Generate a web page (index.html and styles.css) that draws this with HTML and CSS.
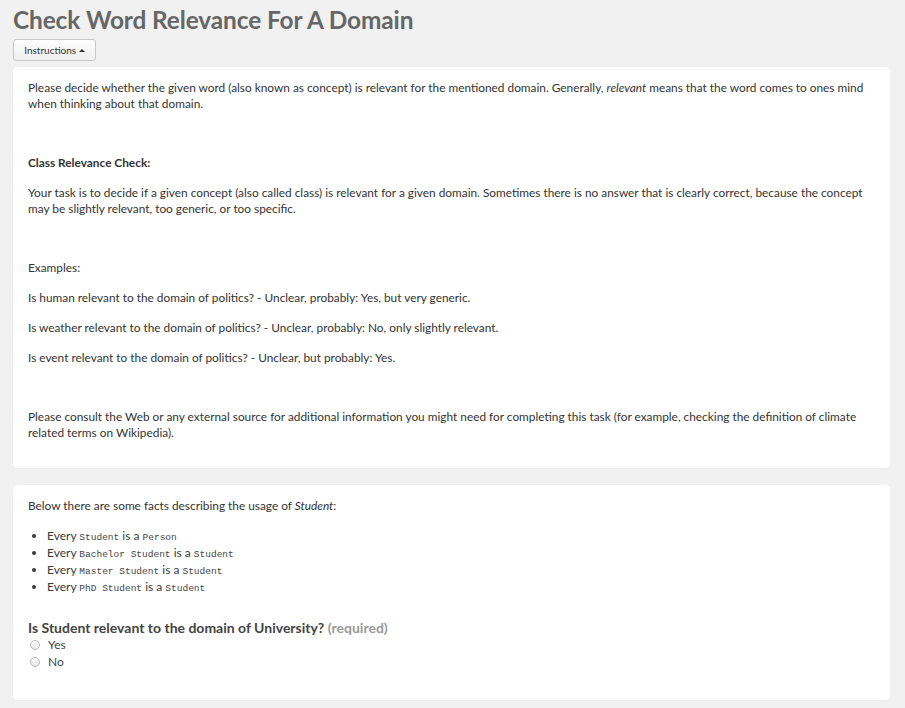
FILE: index.html
```html
<!DOCTYPE html>
<html>
<head>
<meta charset="utf-8">
<link rel="stylesheet" href="styles.css">
</head>
<body>
<div class="page">
  <h1 class="title">Check Word Relevance For A Domain</h1>
  <button class="btn">Instructions <span class="caret"></span></button>
  <div class="panel instructions">
    <p>Please decide whether the given word (also known as concept) is relevant for the mentioned domain. Generally, <em>relevant</em> means that the word comes to ones mind when thinking about that domain.</p>
    <p class="empty">&nbsp;</p>
    <p><strong>Class Relevance Check:</strong></p>
    <p>Your task is to decide if a given concept (also called class) is relevant for a given domain. Sometimes there is no answer that is clearly correct, because the concept may be slightly relevant, too generic, or too specific.</p>
    <p class="empty">&nbsp;</p>
    <p>Examples:</p>
    <p>Is human relevant to the domain of politics? - Unclear, probably: Yes, but very generic.</p>
    <p>Is weather relevant to the domain of politics? - Unclear, probably: No, only slightly relevant.</p>
    <p>Is event relevant to the domain of politics? - Unclear, but probably: Yes.</p>
    <p class="empty">&nbsp;</p>
    <p>Please consult the Web or any external source for additional information you might need for completing this task (for example, checking the definition of climate related terms on Wikipedia).</p>
  </div>
  <div class="panel task">
    <p>Below there are some facts describing the usage of <em>Student</em>:</p>
    <ul class="facts">
      <li>Every <code>Student</code> is a <code>Person</code></li>
      <li>Every <code>Bachelor Student</code> is a <code>Student</code></li>
      <li>Every <code>Master Student</code> is a <code>Student</code></li>
      <li>Every <code>PhD Student</code> is a <code>Student</code></li>
    </ul>
    <div class="question">Is Student relevant to the domain of University? <span class="req">(required)</span></div>
    <label class="opt"><span class="radio"></span>Yes</label>
    <label class="opt"><span class="radio"></span>No</label>
  </div>
</div>
</body>
</html>
```
FILE: styles.css
```css
html, body {
  margin: 0;
  padding: 0;
}
body {
  background: #f1f1f1;
  font-family: Lato, "Open Sans", sans-serif;
  color: #333;
  font-size: 11.85px;
  width: 905px;
  height: 708px;
  overflow: hidden;
}
.page {
  padding: 0 15px 0 13px;
}
.title {
  margin: 0;
  padding-top: 6px;
  font-size: 24.4px;
  line-height: 28px;
  font-weight: 700;
  color: #666;
  letter-spacing: -0.1px;
}
.btn {
  display: block;
  margin-top: 5px;
  height: 22px;
  width: 83px;
  padding: 0;
  font-family: Lato, sans-serif;
  font-size: 10px;
  color: #333;
  background: linear-gradient(#ffffff, #eeeeee);
  border: 1px solid #c8c8c8;
  border-radius: 3px;
  text-align: center;
}
.caret {
  display: inline-block;
  width: 0;
  height: 0;
  border-left: 3px solid transparent;
  border-right: 3px solid transparent;
  border-bottom: 3px solid #333;
  vertical-align: 2px;
}
.panel {
  background: #fff;
  border-radius: 4px;
  box-shadow: 0 0 1px rgba(0,0,0,0.08);
}
.instructions {
  margin-top: 6px;
  padding: 13px 15px 14px 15px;
  height: 374px;
}
.instructions p {
  margin: 0 0 14px;
  line-height: 16px;
}
.instructions p.empty {
  margin-bottom: 13px;
}
.instructions p:last-child {
  margin-bottom: 0;
}
.task {
  margin-top: 17px;
  padding: 13px 15px 0 15px;
  height: 202px;
}
.task p {
  margin: 0 0 13px;
  line-height: 16px;
}
.facts {
  margin: 0 0 24px;
  padding-left: 19px;
  font-size: 12px;
  color: #3a3a3a;
}
.facts li {
  height: 17px;
  line-height: 17px;
}
.facts code {
  font-family: "Liberation Mono", "DejaVu Sans Mono", monospace;
  font-size: 9.5px;
  line-height: 0;
  color: #444;
}
.question {
  font-size: 14px;
  font-weight: 700;
  color: #444;
  line-height: 17px;
}
.req {
  color: #999;
}
.opt {
  display: flex;
  align-items: center;
  font-size: 12px;
  line-height: 17px;
  color: #444;
  padding-left: 2px;
}
.radio {
  width: 8px;
  height: 8px;
  border-radius: 50%;
  border: 1px solid #bbb;
  background: linear-gradient(#fafafa, #e6e6e6);
  margin-right: 8px;
}
```
